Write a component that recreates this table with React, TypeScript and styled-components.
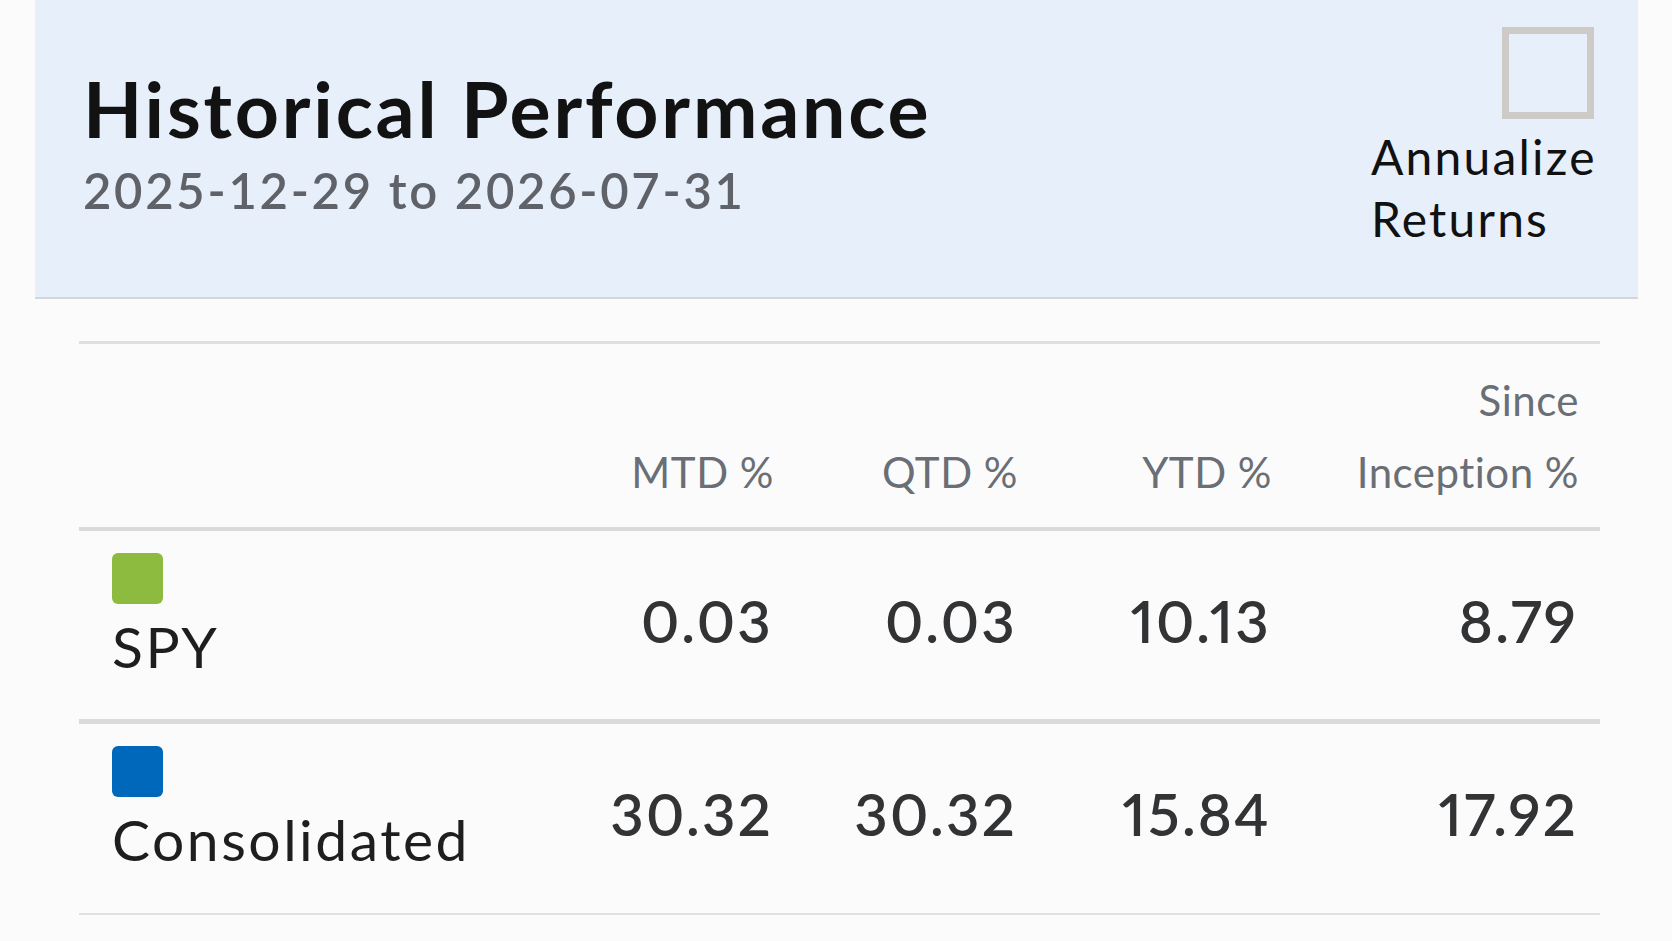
import React from "react";
import styled, { createGlobalStyle } from "styled-components";

const GlobalStyle = createGlobalStyle`
  html, body {
    margin: 0;
    padding: 0;
    background: #fbfbfc;
  }
  body {
    font-family: "Lato", "Liberation Sans", sans-serif;
    -webkit-font-smoothing: antialiased;
  }
`;

const Page = styled.div`
  width: 1672px;
  min-height: 941px;
  display: flex;
  flex-direction: column;
`;

const HeaderPanel = styled.header`
  margin-left: 35px;
  width: 1603px;
  height: 297px;
  box-sizing: content-box;
  background: #e7effa;
  border-bottom: 2px solid #d3d6da;
  display: flex;
  justify-content: space-between;
  align-items: flex-start;
`;

const TitleBlock = styled.div`
  padding-left: 48px;
  padding-top: 70px;
  display: flex;
  flex-direction: column;
`;

const Title = styled.h1`
  margin: 0;
  font-size: 77px;
  line-height: 1;
  font-weight: 700;
  color: #121212;
  letter-spacing: 2.8px;
`;

const DateRange = styled.div`
  margin-top: 19px;
  font-size: 49px;
  line-height: 1;
  font-weight: 600;
  color: #5f6268;
  letter-spacing: 2.7px;
`;

const AnnualizeControl = styled.label`
  padding-top: 27px;
  padding-right: 44px;
  width: 223px;
  display: flex;
  flex-direction: column;
  align-items: flex-end;
  cursor: pointer;
`;

const CheckBox = styled.span`
  width: 92px;
  height: 92px;
  box-sizing: border-box;
  border: 7px solid #cdcac8;
  background: transparent;
  display: block;
`;

const AnnualizeText = styled.span`
  align-self: stretch;
  margin-top: 7px;
  font-size: 48px;
  line-height: 62px;
  font-weight: 400;
  color: #111;
  letter-spacing: 2.2px;
  white-space: nowrap;
`;

const Table = styled.div`
  margin-left: 79px;
  margin-top: 42px;
  width: 1521px;
  border-top: 3px solid #dedfe0;
`;

const Row = styled.div<{ $border: number; $color: string }>`
  display: grid;
  grid-template-columns: 1fr 244px 244px 254px 307px;
  padding-right: 21px;
  align-items: start;
  border-bottom: ${(p) => p.$border}px solid ${(p) => p.$color};
`;

const HeadRow = styled(Row)`
  align-items: end;
  padding-top: 20px;
  padding-bottom: 19px;
`;

const HeadCell = styled.div`
  text-align: right;
  font-size: 42px;
  line-height: 72px;
  color: #6a6e75;
  font-weight: 400;
  letter-spacing: 0.5px;
`;

const NameCell = styled.div`
  padding-left: 33px;
  padding-top: 22px;
  padding-bottom: 39px;
  display: flex;
  flex-direction: column;
  align-items: flex-start;
`;

const Swatch = styled.span<{ $color: string }>`
  width: 51px;
  height: 51px;
  border-radius: 6px;
  background: ${(p) => p.$color};
  display: block;
`;

const Name = styled.span`
  margin-top: 8px;
  font-size: 57px;
  line-height: 1.2;
  color: #1e1e1e;
  font-weight: 400;
  letter-spacing: 2.5px;
`;

const ValueCell = styled.div`
  text-align: right;
  padding-top: 55px;
  padding-right: 1px;
  font-size: 58px;
  line-height: 1.2;
  font-weight: 600;
  color: #323335;
  letter-spacing: 2.2px;
  font-variant-numeric: proportional-nums;
`;

type Perf = { name: string; color: string; values: string[] };

const rows: Perf[] = [
  { name: "SPY", color: "#8dbb3f", values: ["0.03", "0.03", "10.13", "8.79"] },
  { name: "Consolidated", color: "#0068bb", values: ["30.32", "30.32", "15.84", "17.92"] },
];

export default function App() {
  return (
    <>
      <GlobalStyle />
      <Page>
        <HeaderPanel>
          <TitleBlock>
            <Title>Historical Performance</Title>
            <DateRange>2025-12-29 to 2026-07-31</DateRange>
          </TitleBlock>
          <AnnualizeControl>
            <CheckBox />
            <AnnualizeText>
              Annualize
              <br />
              Returns
            </AnnualizeText>
          </AnnualizeControl>
        </HeaderPanel>
        <Table>
          <HeadRow $border={4} $color="#d9dadb">
            <div />
            <HeadCell>MTD %</HeadCell>
            <HeadCell>QTD %</HeadCell>
            <HeadCell>YTD %</HeadCell>
            <HeadCell>
              Since
              <br />
              Inception %
            </HeadCell>
          </HeadRow>
          {rows.map((r, i) => (
            <Row
              key={r.name}
              $border={i === rows.length - 1 ? 2 : 5}
              $color={i === rows.length - 1 ? "#e0e1e2" : "#d9dadb"}
            >
              <NameCell>
                <Swatch $color={r.color} />
                <Name>{r.name}</Name>
              </NameCell>
              {r.values.map((v, j) => (
                <ValueCell key={j}>{v}</ValueCell>
              ))}
            </Row>
          ))}
        </Table>
      </Page>
    </>
  );
}
